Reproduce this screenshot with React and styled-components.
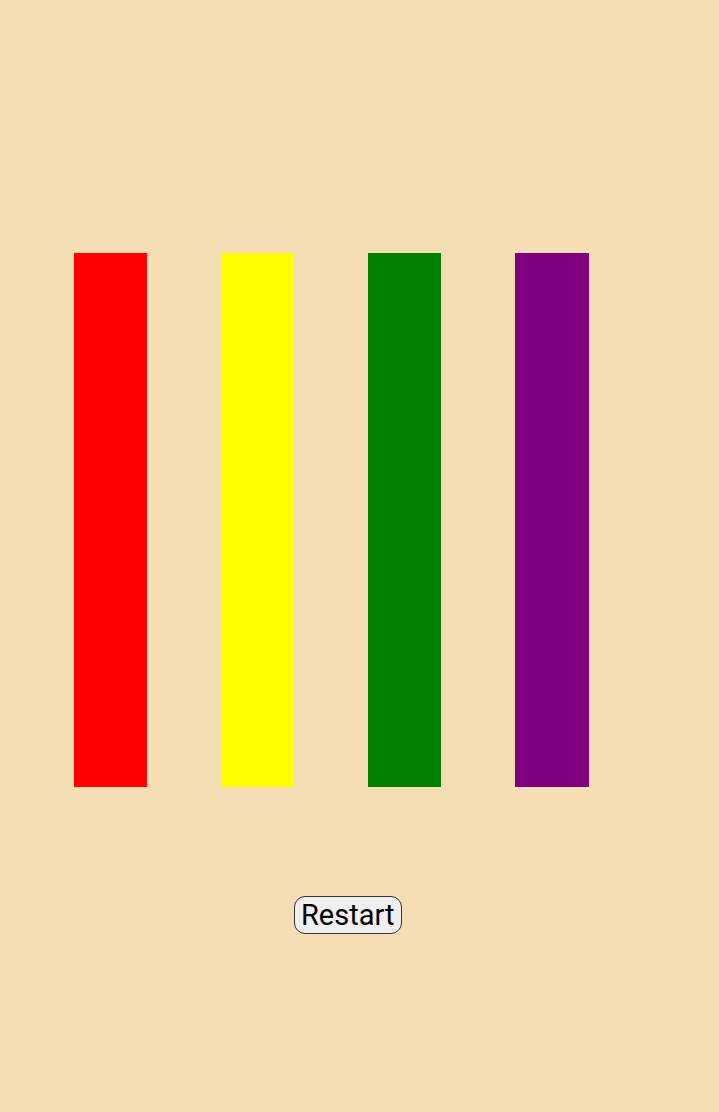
import styled, { createGlobalStyle } from 'styled-components';

const GlobalStyle = createGlobalStyle`
  html, body {
    margin: 0;
    padding: 0;
    background: wheat;
    font-family: Roboto, "Noto Sans", sans-serif;
  }
`;

const Page = styled.div`
  width: 719px;
  height: 1112px;
  background: #f5deb3;
  display: flex;
  flex-direction: column;
`;

const BarRow = styled.div`
  display: flex;
  gap: 74px;
  padding: 253.3px 0 0 73.5px;
  height: 533.4px;
`;

const Bar = styled.div`
  width: 73.3px;
  height: 100%;
  background: ${p => p.color};
`;

const Controls = styled.div`
  padding: 109px 0 0 294px;
`;

const RestartButton = styled.button`
  font-family: Roboto, sans-serif;
  font-size: 29px;
  color: #000;
  background: #efefef;
  border: 1px solid #333;
  border-radius: 11px;
  padding: 1px 6px;
  height: 38px;
  line-height: 34px;
  cursor: pointer;
`;

const colors = ['red', 'yellow', 'green', 'purple'];

const App = () => (
  <Page>
    <GlobalStyle />
    <BarRow>
      {colors.map(c => (
        <Bar key={c} color={c} />
      ))}
    </BarRow>
    <Controls>
      <RestartButton>Restart</RestartButton>
    </Controls>
  </Page>
);

export default App;
